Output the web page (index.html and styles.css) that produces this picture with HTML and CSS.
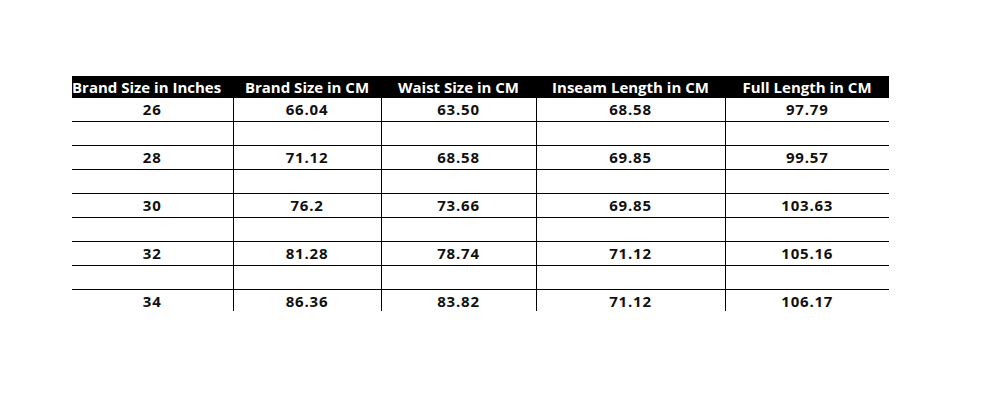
FILE: index.html
```html
<!DOCTYPE html>
<html>
<head>
<meta charset="utf-8">
<link rel="stylesheet" href="styles.css">
</head>
<body>
<table class="size-table">
  <colgroup>
    <col class="c1"><col class="c2"><col class="c3"><col class="c4"><col class="c5">
  </colgroup>
  <thead>
    <tr>
      <th class="first">Brand Size in Inches</th>
      <th>Brand Size in CM</th>
      <th>Waist Size in CM</th>
      <th>Inseam Length in CM</th>
      <th>Full Length in CM</th>
    </tr>
  </thead>
  <tbody>
    <tr><td>26</td><td>66.04</td><td>63.50</td><td>68.58</td><td>97.79</td></tr>
    <tr class="blank"><td></td><td></td><td></td><td></td><td></td></tr>
    <tr><td>28</td><td>71.12</td><td>68.58</td><td>69.85</td><td>99.57</td></tr>
    <tr class="blank"><td></td><td></td><td></td><td></td><td></td></tr>
    <tr><td>30</td><td>76.2</td><td>73.66</td><td>69.85</td><td>103.63</td></tr>
    <tr class="blank"><td></td><td></td><td></td><td></td><td></td></tr>
    <tr><td>32</td><td>81.28</td><td>78.74</td><td>71.12</td><td>105.16</td></tr>
    <tr class="blank"><td></td><td></td><td></td><td></td><td></td></tr>
    <tr class="last"><td>34</td><td>86.36</td><td>83.82</td><td>71.12</td><td>106.17</td></tr>
  </tbody>
</table>
</body>
</html>
```
FILE: styles.css
```css
html, body {
  margin: 0;
  padding: 0;
  background: #ffffff;
}
body {
  padding: 76px 0 0 72px;
  font-family: "Open Sans", "Liberation Sans", sans-serif;
}
.size-table {
  border-collapse: collapse;
  table-layout: fixed;
  width: 817px;
}
.c1 { width: 161px; }
.c2 { width: 148px; }
.c3 { width: 155px; }
.c4 { width: 189px; }
.c5 { width: 164px; }
.size-table th {
  background: #000000;
  color: #ffffff;
  font-weight: 700;
  font-size: 15px;
  height: 22px;
  padding: 0;
  text-align: center;
  white-space: nowrap;
  line-height: 22px;
}
.size-table th.first {
  text-align: left;
}
.size-table td {
  height: 23px;
  padding: 0;
  text-align: center;
  font-weight: 700;
  font-size: 15px;
  letter-spacing: 0.8px;
  color: #111111;
  border-bottom: 1px solid #000000;
  border-left: 1px solid #000000;
  line-height: 23px;
}
.size-table td:first-child {
  border-left: none;
}
.size-table tr.last td {
  border-bottom: none;
  height: 20px;
  line-height: 20px;
  vertical-align: top;
  padding-top: 1px;
}
```
